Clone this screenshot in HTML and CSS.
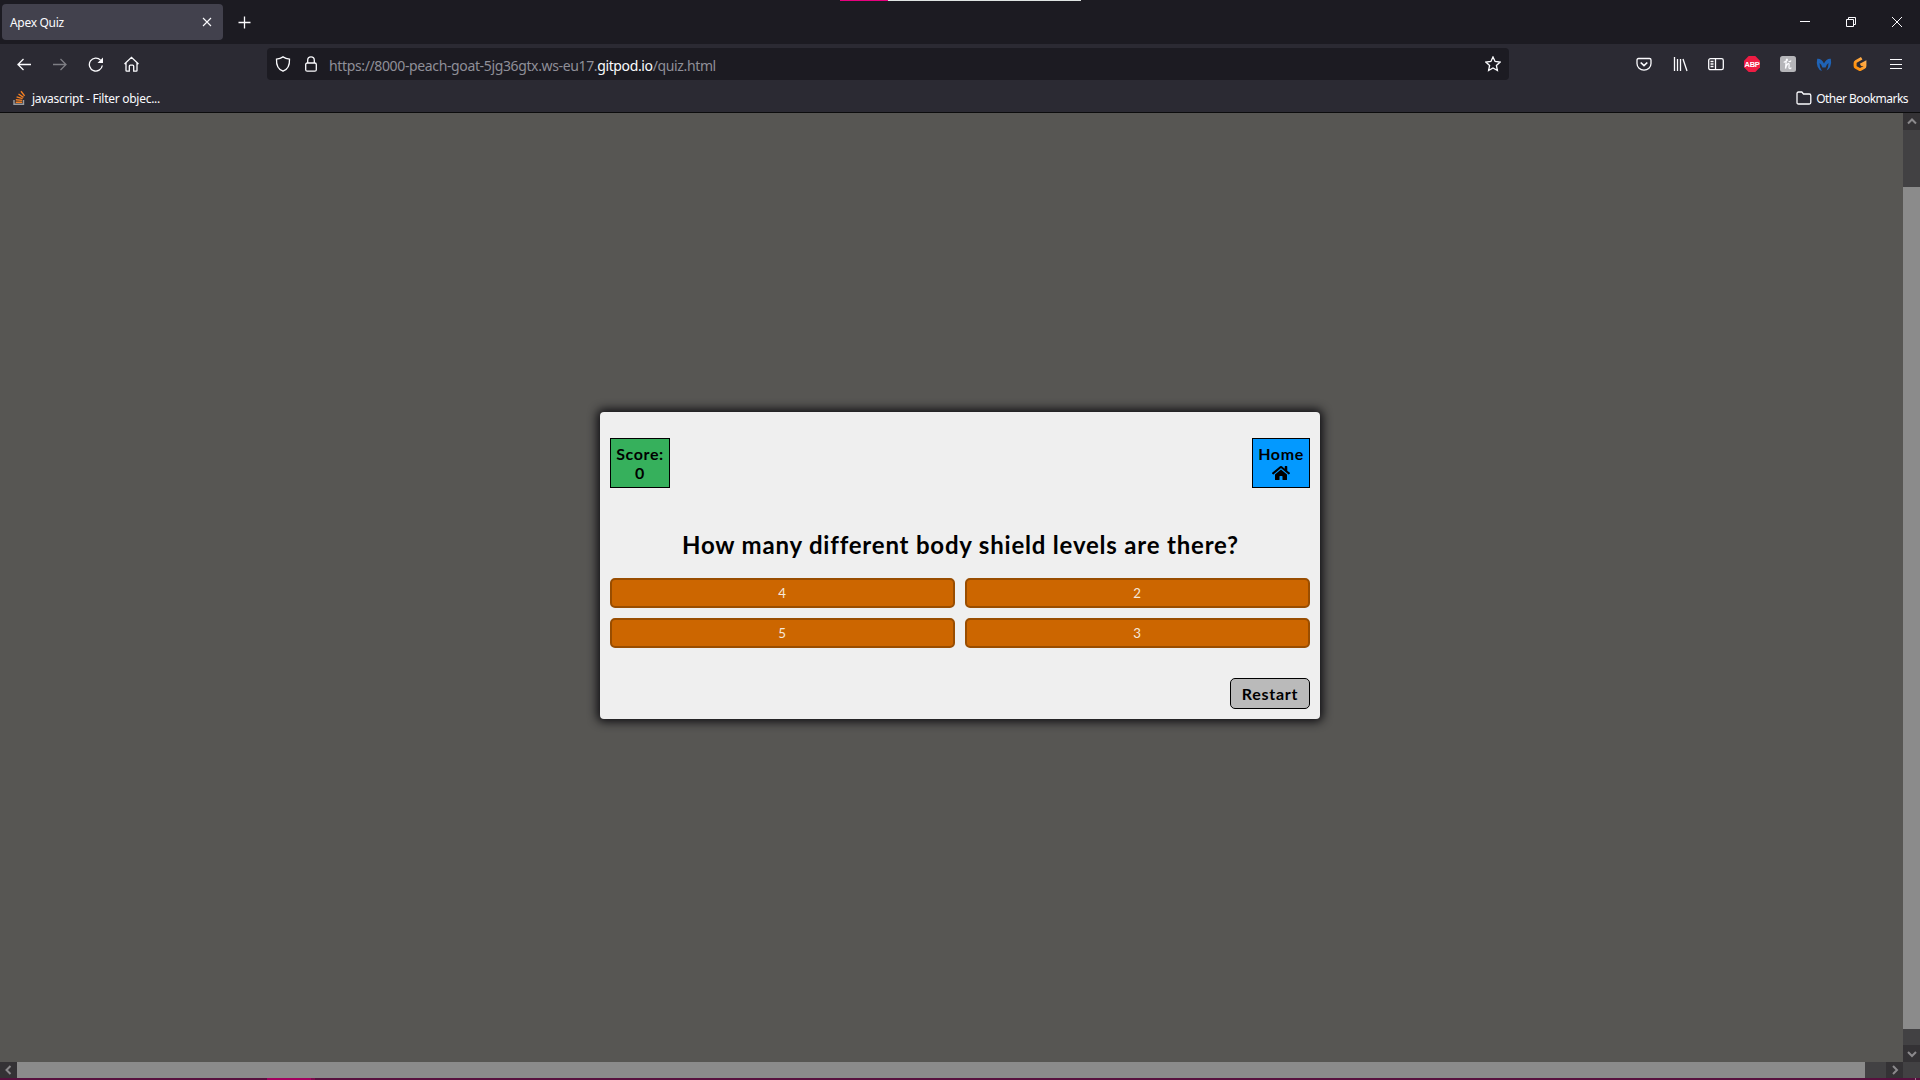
FILE: index.html
```html
<!DOCTYPE html>
<html lang="en">
<head>
<meta charset="utf-8">
<title>Apex Quiz</title>
<link rel="stylesheet" href="styles.css">
</head>
<body>
<header class="chrome">
  <div class="tabs">
    <div class="tab"><span class="tab-title">Apex Quiz</span>
      <svg class="tab-close" width="10" height="10" viewBox="0 0 10 10"><path d="M1 1l8 8M9 1l-8 8"/></svg>
    </div>
    <svg class="new-tab" width="14" height="14" viewBox="0 0 14 14"><path d="M6.500 1.500v12M.5 7.500h12"/></svg>
    <div class="window-buttons">
      <svg width="10" height="10" viewBox="0 0 10 10"><path d="M0 4.500h10"/></svg>
      <svg width="10" height="10" viewBox="0 0 10 10"><path d="M.5 2.500h7v7h-7zM2.500 2.500v-2h7v7h-2"/></svg>
      <svg width="10" height="10" viewBox="0 0 10 10"><path d="M0 0l10 10M10 0L0 10"/></svg>
    </div>
    <div class="activity"><i></i></div>
  </div>
  <nav class="toolbar">
    <div class="nav-buttons">
      <svg width="16" height="16" viewBox="0 0 16 16"><path d="M15 8.500H1.500M7.500 3L2 8.500l5.500 5.500"/></svg>
      <svg class="disabled" width="16" height="16" viewBox="0 0 16 16"><path d="M1 8.500h13M8.500 3L14 8.500 8.500 14"/></svg>
      <svg width="16" height="16" viewBox="0 0 16 16"><path d="M12.600 4.100A6.500 6.500 0 1 0 14.300 9.500"/><path class="solid" d="M15 1.500V7H9.500z"/></svg>
      <svg width="16" height="16" viewBox="0 0 16 16"><path d="M.5 8L7.500 1.300 14.500 8M2 7v7.500q0 .7.700.7H5.300V10.200q0-1 1-1h2.400q1 0 1 1v5h2.600q.7 0 .7-.7V7"/></svg>
    </div>
    <div class="address">
      <svg width="16" height="16" viewBox="0 0 16 16"><path d="M8 .9c2.200 1.500 4 2 6.500 2.300C14.800 9.500 12.500 13.500 8 15.200 3.500 13.500 1.200 9.500 1.500 3.200 4 2.900 5.800 2.400 8 .9z"/></svg>
      <svg width="16" height="16" viewBox="0 0 16 16"><rect x="2.700" y="7" width="10.600" height="8.200" rx="1.500"/><path d="M4.700 7V4.200a3.300 3.300 0 0 1 6.600 0V7"/></svg>
      <span class="url">https://8000-peach-goat-5jg36gtx.ws-eu17.<b>gitpod.io</b>/quiz.html</span>
      <svg class="star" width="16" height="16" viewBox="0 0 16 16"><path d="M8 .9l2.100 4.600 5 .6-3.700 3.400 1 5-4.400-2.500-4.400 2.500 1-5L.9 6.100l5-.6z"/></svg>
    </div>
    <div class="extensions">
      <svg width="16" height="16" viewBox="0 0 16 16"><path d="M2.500 2.500h11q1.500 0 1.500 1.500v3.500a7 6.700 0 0 1-14 0V4q0-1.500 1.500-1.500z"/><path class="bold" d="M4.700 6.500L8 9.600l3.300-3.100"/></svg>
      <svg width="16" height="16" viewBox="0 0 16 16"><path d="M2.500 1v14M5.500 3v12M8.500 3v12M11 3l4 12"/></svg>
      <svg width="16" height="16" viewBox="0 0 16 16"><rect x=".7" y="2.700" width="14.600" height="11" rx="1.800"/><path d="M7.500 2.700v11M2.500 5.500h3M2.500 8h3M2.500 10.500h3"/></svg>
      <svg class="abp" width="16" height="16" viewBox="0 0 16 16"><path d="M4.700 0h6.600L16 4.700v6.600L11.300 16H4.700L0 11.300V4.700z"/><text x="8" y="10.700" text-anchor="middle">ABP</text></svg>
      <svg class="honey" width="16" height="16" viewBox="0 0 16 16"><rect width="16" height="16" rx="2.500"/><path d="M3.700 6.300C6.800 5.500 8 3.800 7 3.200 6 2.800 6.200 7 5.500 12.500 6.500 8.800 8 6.900 8.900 7.700s-.6 3.800.3 4.600 1.800-.2 2-.7M8.600 5.300c1 .7 2 .2 2.400-.7"/></svg>
      <svg class="malware" width="16" height="16" viewBox="0 0 16 16"><path d="M1.200 2.800Q5.500 2.200 8 7.600q2.500-5.400 6.800-4.800 1 4.500-.6 8-1.200 2.600-3.600 3.800 2-3.400 1.900-7.600-2 1.300-2.900 4.500H6.400Q5.500 8.300 3.500 7q-.1 4.500 2.400 8Q3 14.200 1.600 10.800.2 7 1.200 2.800z"/></svg>
      <svg class="gitpod" width="16" height="16" viewBox="0 0 16 16"><defs><linearGradient id="gp" x1="1" y1="0" x2="0" y2="1"><stop offset="0" stop-color="#ffb45b"/><stop offset="1" stop-color="#ff8a00"/></linearGradient></defs><path d="M9.700 2.300L4 5.500q-.9.500-.9 1.500v3q0 1 .9 1.500l3.200 1.800q.8.500 1.600 0l3.200-1.800q.9-.5.9-1.500V6.800L8.500 9"/></svg>
      <svg class="menu" width="16" height="16" viewBox="0 0 16 16"><path d="M2 3.500h12M2 8.500h12M2 12.500h12"/></svg>
    </div>
  </nav>
  <div class="bookmarks">
    <svg class="stack" width="14" height="16" viewBox="0 0 14 16"><path class="tray" d="M1 10v4.300h9.500V10"/><path d="M2.700 12.300h6.500M2.800 9.700l6.400.7M3.600 6.800l6 1.900M5.500 4l5 3.400M8 1.300l3.600 4.600"/></svg>
    <span class="bookmark">javascript - Filter objec...</span>
    <svg class="folder" width="16" height="16" viewBox="0 0 16 16"><path d="M2.500 2h3.300l1.700 2h5.800q1.500 0 1.500 1.500v7q0 1.500-1.500 1.500H2.500Q1 14 1 12.500v-9Q1 2 2.500 2z"/></svg>
    <span class="other">Other Bookmarks</span>
  </div>
</header>
<div class="viewport">
  <main class="page">
    <section class="quiz">
      <div class="quiz-head">
        <div class="score">Score:<br>0</div>
        <a class="home">Home<svg width="18" height="16" viewBox="0 0 576 512"><path d="M280 148L96 300v164q0 16 16 16h112q16 0 16-16v-96q0-16 16-16h64q16 0 16 16v96q0 16 16 16h112q16 0 16-16V300L296 148q-8-6-16 0zM572 251l-84-69V44q0-12-12-12h-56q-12 0-12 12v72l-90-74q-30-24-60 0L4 251q-8 8-2 17l26 31q8 8 17 2L280 107q8-6 16 0l235 194q9 6 17-2l26-31q6-9-2-17z"/></svg></a>
      </div>
      <h1 class="question">How many different body shield levels are there?</h1>
      <div class="answers">
        <button>4</button><button>2</button>
        <button>5</button><button>3</button>
      </div>
      <div class="quiz-foot"><button class="restart">Restart</button></div>
    </section>
  </main>
  <div class="vbar">
    <div class="arrow"><svg width="10" height="10" viewBox="0 0 10 10"><path d="M1 6.500l4-4 4 4"/></svg></div>
    <div class="vthumb"></div>
    <div class="arrow"><svg width="10" height="10" viewBox="0 0 10 10"><path d="M1 3l4 4 4-4"/></svg></div>
  </div>
  <div class="hbar">
    <div class="arrow"><svg width="10" height="10" viewBox="0 0 10 10"><path d="M6.500 1l-4 4 4 4"/></svg></div>
    <div class="hthumb"></div>
    <div class="arrow"><svg width="10" height="10" viewBox="0 0 10 10"><path d="M3 1l4 4-4 4"/></svg></div>
  </div>
  <div class="corner"></div>
</div>
<footer class="taskbar"><i class="active-app"></i><i class="app-edge"></i><i class="desktop-edge"></i></footer>
</body>
</html>
```
FILE: styles.css
```css
* { box-sizing: border-box; }
html, body { height: 100%; }
body {
  margin: 0;
  overflow: hidden;
  display: flex;
  flex-direction: column;
  background: #575653;
  font-family: "Noto Sans", sans-serif;
}
svg { display: block; flex: none; fill: none; stroke: #fbfbfe; stroke-width: 1.3; }
.solid { fill: #fbfbfe; stroke: none; }
.bold { stroke-width: 1.7; }

/* Browser chrome */
.chrome { flex: none; height: 113px; border-bottom: 1px solid #0c0c0d; background: #2b2a33; color: #fbfbfe; }
.tabs { position: relative; height: 44px; display: flex; align-items: center; background: #1c1b22; }
.tab {
  width: 221px; height: 36px; margin: 0 16px 0 2px; padding: 0 11px 0 8px;
  display: flex; align-items: center; justify-content: space-between;
  border-radius: 4px; background: #42414d; font-size: 12px;
}
.tab-title { padding-top: 1px; letter-spacing: -.3px; }
.tab-close { stroke-width: 1.1; }
.new-tab { margin-left: -1px; }
.window-buttons { margin-left: auto; padding-right: 18px; display: flex; gap: 36px; }
.window-buttons svg, .menu { stroke-width: 1; }
.activity { position: absolute; left: 840px; top: 0; width: 241px; height: 1px; background: #dfe4e3; }
.activity i { display: block; width: 48px; height: 1px; background: #e6007e; }

.toolbar { height: 40px; padding-top: 4px; display: flex; align-items: flex-start; }
.nav-buttons { width: 267px; height: 32px; padding-left: 16px; display: flex; align-items: center; gap: 20px; }
.disabled { opacity: .4; }
.address {
  width: 1242px; height: 32px; padding: 0 8px; display: flex; align-items: center; gap: 12px;
  border-radius: 4px; background: #1c1b22;
}
.url { margin-left: -2px; padding-top: 2px; color: #8f8f98; font-size: 14px; white-space: nowrap; letter-spacing: -.365px; }
.url b { color: #fbfbfe; font-weight: 400; }
.star { margin-left: auto; }
.extensions { margin-left: auto; height: 32px; padding-right: 16px; display: flex; align-items: center; gap: 20px; }
.abp path { fill: #ee1c43; stroke: none; }
.abp text { fill: #fff; stroke: none; font: bold 7.500px "Liberation Sans", sans-serif; letter-spacing: -.3px; }
.honey rect { fill: #b5b5b9; stroke: none; }
.malware path { fill: #1f63b6; stroke: none; }
.gitpod path { stroke: url(#gp); stroke-width: 3; }

.bookmarks { height: 28px; padding: 1px 12px 0 13px; display: flex; align-items: center; font-size: 12px; }
.stack { stroke: #f48024; stroke-width: 1.4; margin-top: -2px; }
.stack .tray { stroke: #9a9ca0; }
.bookmark { margin-left: 5px; letter-spacing: -.27px; }
.folder { margin: -2px 4px 0 auto; }
.other { letter-spacing: -.53px; }

/* Page with its scrollbars */
.viewport { flex: 1; min-height: 0; display: grid; grid-template: 1fr 16px / 1fr 17px; }
.page { display: flex; align-items: flex-start; padding: 299px 0 0 600px; background: #575653; }
.vbar, .hbar { display: flex; background: #424143; }
.vbar { flex-direction: column; }
.arrow { flex: none; width: 17px; height: 17px; display: flex; align-items: center; justify-content: center; background: #343235; }
.hbar .arrow { height: 16px; }
.arrow svg { stroke: #8b898c; stroke-width: 2; }
.vthumb { flex: 1; margin: 57px 0 16px; background: #8b8b8b; }
.hthumb { flex: 1; margin-right: 21px; background: #8b8b8b; }
.corner { background: #424143; }

/* Quiz card */
.quiz {
  width: 720px; height: 307px; padding: 26px 10px 10px;
  border-radius: 4px; background: #efefef; color: #000;
  box-shadow: 0 0 10px 3px #111014;
  font-family: Lato, sans-serif;
}
.quiz-head { display: flex; justify-content: space-between; font-size: 16px; font-weight: 700; line-height: 19px; letter-spacing: .6px; text-align: center; }
.score, .home { height: 50px; padding-top: 5px; border: 1px solid #000; }
.score { width: 60px; background: #36b05c; }
.home { width: 58px; background: #0399ff; }
.home svg { margin: 2px auto 0; fill: #000; stroke: none; }
.question { margin: 40px 0 0; padding-left: 1px; height: 50px; line-height: 34px; text-align: center; font-size: 24px; font-weight: 700; letter-spacing: .8px; }
.answers { display: grid; grid-template-columns: 1fr 1fr; gap: 10px; }
.answers button {
  height: 30px; padding: 0 1px 0 0; border: 2px solid #994d00; border-radius: 5px;
  background: #cc6600; color: #f6e9dc; font: 13.330px Lato, sans-serif;
}
.quiz-foot { display: flex; justify-content: flex-end; margin-top: 30px; }
.restart {
  width: 80px; height: 31px; padding: 0; border: 1px solid #000; border-radius: 5px;
  background: #bababa; color: #000; font: 700 16px Lato, sans-serif; letter-spacing: .75px;
}

/* Sliver of the desktop taskbar */
.taskbar { flex: none; height: 2px; display: flex; background: #57103e; }
.active-app { width: 44px; margin-left: 267px; background: #a3005f; }
.app-edge { width: 4px; background: #7a0b4c; }
.desktop-edge { width: 1px; margin: 0 4px 0 auto; background: #a06f90; }
```
